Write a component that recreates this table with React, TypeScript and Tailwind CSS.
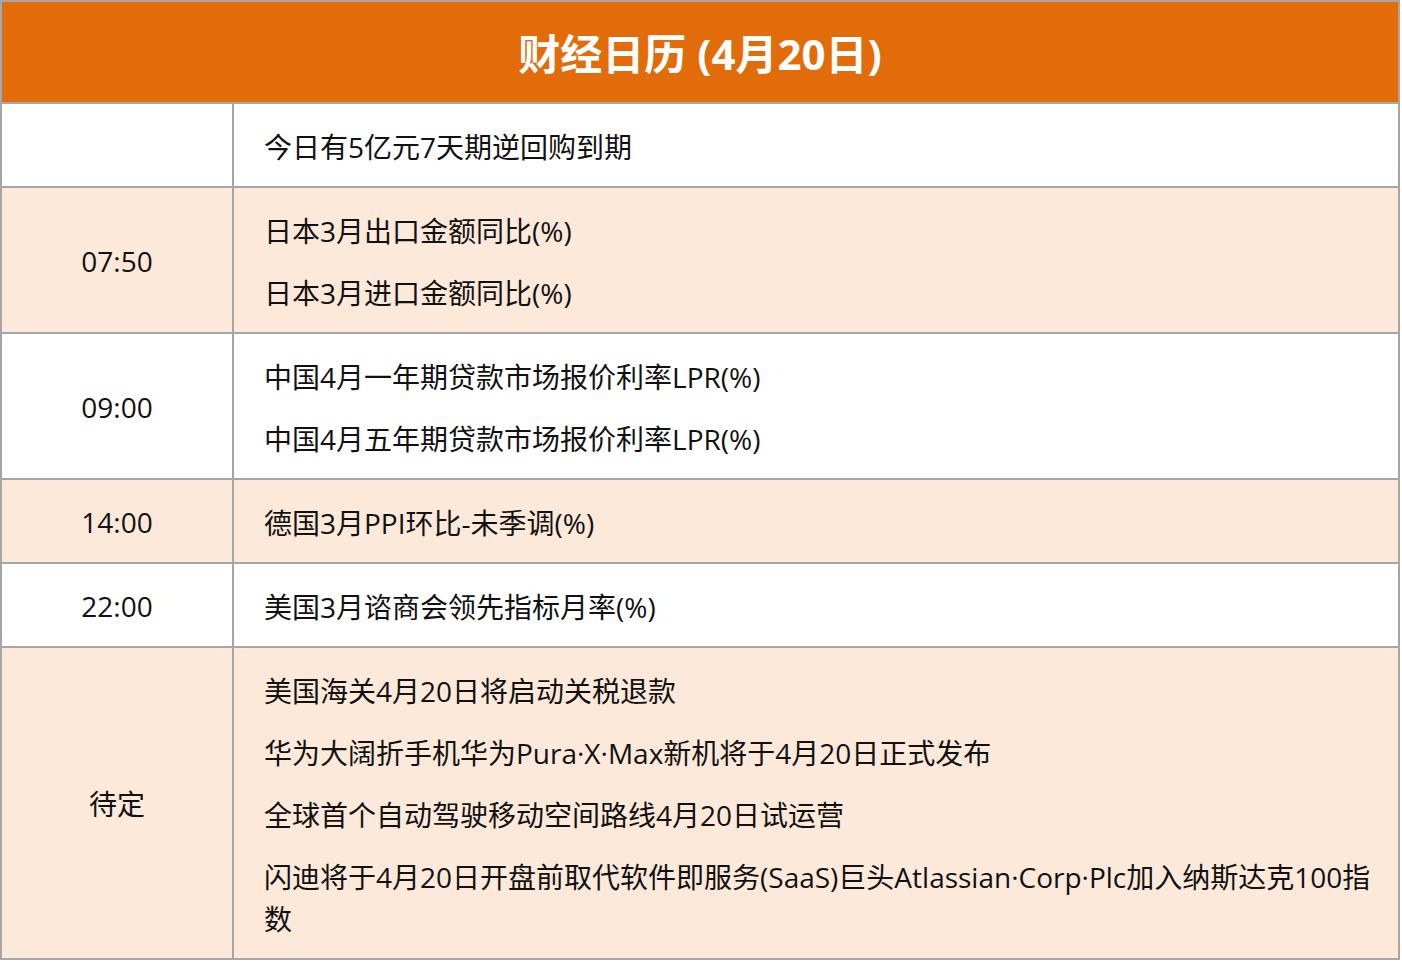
const rows: { time: string; items: string[]; shaded: boolean }[] = [
  { time: '', items: ['今日有5亿元7天期逆回购到期'], shaded: false },
  { time: '07:50', items: ['日本3月出口金额同比(%)', '日本3月进口金额同比(%)'], shaded: true },
  {
    time: '09:00',
    items: ['中国4月一年期贷款市场报价利率LPR(%)', '中国4月五年期贷款市场报价利率LPR(%)'],
    shaded: false,
  },
  { time: '14:00', items: ['德国3月PPI环比-未季调(%)'], shaded: true },
  { time: '22:00', items: ['美国3月谘商会领先指标月率(%)'], shaded: false },
  {
    time: '待定',
    items: [
      '美国海关4月20日将启动关税退款',
      '华为大阔折手机华为Pura·X·Max新机将于4月20日正式发布',
      '全球首个自动驾驶移动空间路线4月20日试运营',
      '闪迪将于4月20日开盘前取代软件即服务(SaaS)巨头Atlassian·Corp·Plc加入纳斯达克100指数',
    ],
    shaded: true,
  },
]

export default function App() {
  return (
    <div
      className="w-[1402px] h-[962px] bg-white text-[#111]"
      style={{ fontFamily: '"Open Sans", "Noto Sans CJK SC", sans-serif' }}
    >
      <div className="w-[1400px] border-2 border-[#a6a6a6]">
        {/* Header */}
        <div className="h-[102px] pt-[3px] bg-[#e36c0a] border-b-2 border-[#a6a6a6] flex items-center justify-center">
          <h1 className="text-[42px] font-bold text-white leading-none">财经日历 (4月20日)</h1>
        </div>

        {rows.map((row, i) => (
          <div
            key={i}
            className={`flex ${i < rows.length - 1 ? 'border-b-2 border-[#a6a6a6]' : ''} ${
              row.shaded ? 'bg-[#fde9d9]' : 'bg-white'
            }`}
          >
            <div className="w-[232px] shrink-0 border-r-2 border-[#a6a6a6] flex items-center justify-center text-[28px] pt-[2px]">
              {row.time}
            </div>
            <div className="flex-1 pl-[30px] pr-[10px] pt-[22px] pb-[18px] flex flex-col gap-[20px]">
              {row.items.map((t) => (
                <p key={t} className="text-[28px] leading-[42px]">
                  {t}
                </p>
              ))}
            </div>
          </div>
        ))}
      </div>
    </div>
  )
}
